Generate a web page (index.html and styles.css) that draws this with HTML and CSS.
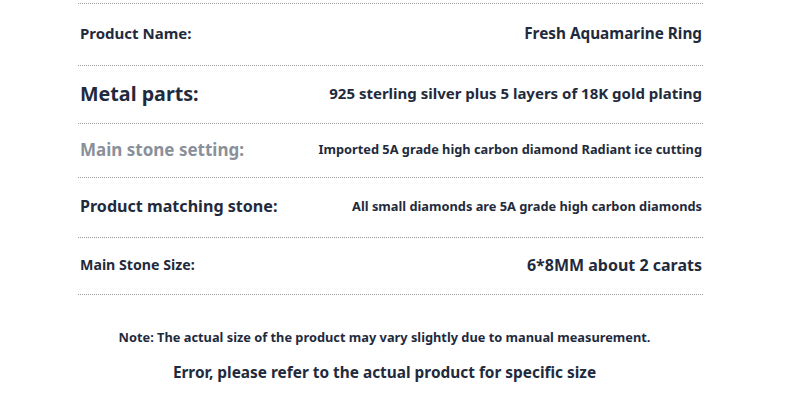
FILE: index.html
```html
<!DOCTYPE html>
<html>
<head>
<meta charset="utf-8">
<link rel="stylesheet" href="styles.css">
</head>
<body>
<div class="page">
  <div class="table">
    <div class="row r1">
      <span class="label l1">Product Name:</span>
      <span class="value v1">Fresh Aquamarine Ring</span>
    </div>
    <div class="row r2">
      <span class="label l2">Metal parts:</span>
      <span class="value v2">925 sterling silver plus 5 layers of 18K gold plating</span>
    </div>
    <div class="row r3">
      <span class="label l3">Main stone setting:</span>
      <span class="value v3">Imported 5A grade high carbon diamond Radiant ice cutting</span>
    </div>
    <div class="row r4">
      <span class="label l4">Product matching stone:</span>
      <span class="value v4">All small diamonds are 5A grade high carbon diamonds</span>
    </div>
    <div class="row r5">
      <span class="label l5">Main Stone Size:</span>
      <span class="value v5">6*8MM about 2 carats</span>
    </div>
  </div>
  <p class="note">Note: The actual size of the product may vary slightly due to manual measurement.</p>
  <p class="note2">Error, please refer to the actual product for specific size</p>
</div>
</body>
</html>
```
FILE: styles.css
```css
html, body {
  margin: 0;
  padding: 0;
  background: #ffffff;
}
body {
  font-family: "Noto Sans", "Open Sans", sans-serif;
  font-weight: 700;
  color: #1f2b3d;
  width: 790px;
  height: 403px;
  overflow: hidden;
}
.page {
  padding-top: 3px;
}
.table {
  margin-left: 78px;
  width: 625px;
  border-top: 1px dotted #9a9a9a;
}
.row {
  display: flex;
  justify-content: space-between;
  align-items: center;
  padding: 0 1px 3px 2px;
  border-bottom: 1px dotted #9a9a9a;
  white-space: nowrap;
}
.r1 { height: 58px; }
.r2 { height: 54px; }
.r3 { height: 50px; }
.r4 { height: 56px; }
.r5 { height: 53px; }
.l1 { font-size: 15px; }
.l2 { font-size: 19.7px; }
.l3 { font-size: 17px; color: #8a9099; }
.l4 { font-size: 16.1px; }
.l5 { font-size: 14.2px; }
.v1 { font-size: 15.3px; }
.v2 { font-size: 15px; }
.v3 { font-size: 12.8px; }
.v4 { font-size: 12.8px; }
.v5 { font-size: 16px; }
.note {
  margin: 33px 21px 0 0;
  text-align: center;
  font-size: 12.8px;
}
.note2 {
  margin: 16px 21px 0 0;
  text-align: center;
  font-size: 15.4px;
}
```
